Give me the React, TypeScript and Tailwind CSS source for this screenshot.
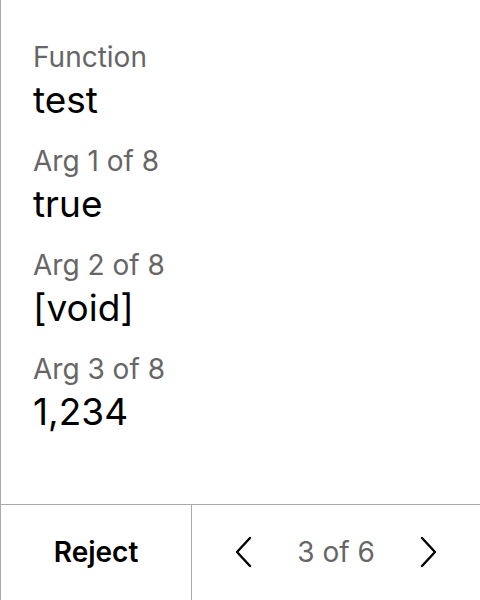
import React from "react";

const Field = ({ label, value }: { label: string; value: string }) => (
  <div className="flex flex-col">
    <div className="text-[28px] leading-[38px] text-[#666666]">{label}</div>
    <div className="text-[37px] leading-[48px] text-black">{value}</div>
  </div>
);

export default function App() {
  return (
    <div
      className="w-[480px] h-[600px] bg-white flex flex-col border-l border-[#aaaaaa]"
      style={{ fontFamily: "Inter, 'Noto Sans', sans-serif" }}
    >
      <div className="flex-1 flex flex-col gap-[18px] pt-[38px] pl-[32px]">
        <Field label="Function" value="test" />
        <Field label="Arg 1 of 8" value="true" />
        <Field label="Arg 2 of 8" value="[void]" />
        <Field label="Arg 3 of 8" value="1,234" />
      </div>
      <div className="h-[96px] flex border-t border-[#aaaaaa]">
        <div className="w-[191px] flex items-center justify-center border-r border-[#aaaaaa] text-[28px] font-semibold text-black pb-[2px]">
          Reject
        </div>
        <div className="flex-1 flex items-center justify-center gap-[42px] pb-[2px]">
          <svg width="22" height="32" viewBox="0 0 22 32" fill="none" stroke="black" strokeWidth="2.4" strokeLinecap="round" strokeLinejoin="round">
            <path d="M17 2 L4 16 L17 30" />
          </svg>
          <span className="text-[28px] text-[#666666]">3 of 6</span>
          <svg width="22" height="32" viewBox="0 0 22 32" fill="none" stroke="black" strokeWidth="2.4" strokeLinecap="round" strokeLinejoin="round">
            <path d="M5 2 L18 16 L5 30" />
          </svg>
        </div>
      </div>
    </div>
  );
}
